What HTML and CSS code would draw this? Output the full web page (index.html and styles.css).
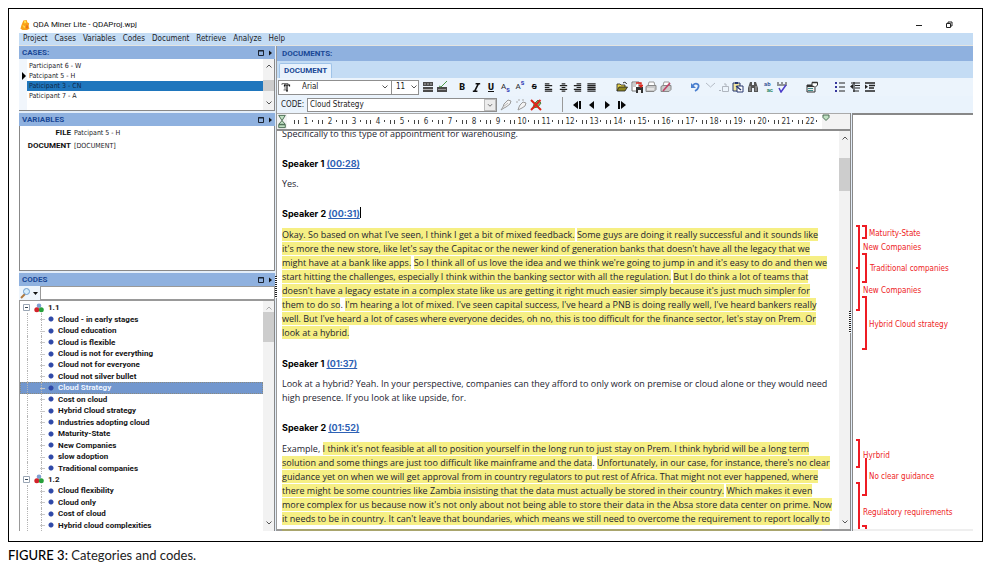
FILE: index.html
```html
<!DOCTYPE html>
<html lang="en">
<head>
<meta charset="utf-8">
<title>QDA Miner Lite - QDAProj.wpj</title>
<link rel="stylesheet" href="styles.css">
</head>
<body>
<figure class="figure">
<div class="frame">
<div class="app">
  <header class="titlebar">
    <svg class="logo" viewBox="0 0 12 13"><path d="M4 1l4-.6 1 3 2 1-.6 3.600 1 3-3 1.600H3L.6 11l1-4z" fill="#f9a11b"/><path d="M4.600 1.600l2.600-.3.4 2.500-2.200 1zM3 6.400l3 1.600-.8 2.600z" fill="#ffe14d"/><path d="M8 6l2 2-1 3-2-1z" fill="#e9711c"/></svg>
    <h1 class="title">QDA Miner Lite - QDAProj.wpj</h1>
    <div class="window-buttons">
      <button aria-label="Minimize"><svg viewBox="0 0 8 8"><path d="M1 4.500h6" stroke="#222" fill="none"/></svg></button>
      <button aria-label="Restore"><svg viewBox="0 0 8 8"><path d="M1.500 2.500h4v4h-4zM3 2V1h4v4H6" stroke="#222" fill="none"/></svg></button>
    </div>
  </header>
  <nav class="menubar">
    <button>Project</button><button>Cases</button><button>Variables</button><button>Codes</button><button>Document</button><button>Retrieve</button><button>Analyze</button><button>Help</button>
  </nav>

  <div class="workspace">
    <aside class="sidebar">
      <section class="panel cases">
        <div class="panel-head"><h2>CASES:</h2><svg class="panel-tools" viewBox="0 0 16 8"><path d="M1.500 1.500h5v5h-5zM1 2h6" stroke="#1b2433" fill="none"/><path d="M12 1.500l3 2.500-3 2.500z" fill="#111"/></svg></div>
        <div class="panel-body">
          <ul class="case-list">
            <li>Participant 6 - W</li>
            <li class="current">Patcipant 5 - H</li>
            <li class="selected">Paticipant 3 - CN</li>
            <li>Paticipant 7 - A</li>
          </ul>
          <div class="scrollbar"><svg viewBox="0 0 8 8"><path d="M1.500 5.500L4 3l2.500 2.500" class="chev"/></svg><span class="thumb"></span><svg class="down" viewBox="0 0 8 8"><path d="M1.500 2.500L4 5l2.500-2.500" class="chev"/></svg></div>
        </div>
      </section>

      <section class="panel variables">
        <div class="panel-head"><h2>VARIABLES</h2><svg class="panel-tools" viewBox="0 0 16 8"><path d="M1.500 1.500h5v5h-5zM1 2h6" stroke="#1b2433" fill="none"/><path d="M12 1.500l3 2.500-3 2.500z" fill="#111"/></svg></div>
        <div class="panel-body">
          <table class="variable-table">
            <tr><th scope="row">FILE</th><td>Patcipant 5 - H</td></tr>
            <tr><th scope="row">DOCUMENT</th><td>[DOCUMENT]</td></tr>
          </table>
        </div>
      </section>

      <section class="panel codes">
        <div class="panel-head"><h2>CODES</h2><svg class="panel-tools" viewBox="0 0 16 8"><path d="M1.500 1.500h5v5h-5zM1 2h6" stroke="#1b2433" fill="none"/><path d="M12 1.500l3 2.500-3 2.500z" fill="#111"/></svg></div>
        <div class="search">
          <button aria-label="Search options"><svg viewBox="0 0 20 12"><path d="M2 11l4-4" stroke="#b0793f" stroke-width="2"/><circle cx="7.500" cy="4.500" r="3" fill="#d5ecfb" stroke="#6d9ccc"/><path d="M14 5h5l-2.500 3z" fill="#111"/></svg></button>
          <input type="text" aria-label="Search codes">
        </div>
        <div class="panel-body">
          <ul class="tree">
            <li class="root"><svg class="box" viewBox="0 0 7 7"><path d="M.5.500h6v6h-6z" fill="#fff" stroke="#9aa6b5"/><path d="M2 3.500h3" stroke="#345"/></svg><svg class="balls" viewBox="0 0 10 10"><circle cx="5" cy="2.800" r="2.300" fill="#7f9fd0"/><circle cx="2.800" cy="6.800" r="2.500" fill="#d3222a"/><circle cx="7.300" cy="6.800" r="2.500" fill="#27a03a"/></svg>1.1</li>
            <li>Cloud - in early stages</li>
            <li>Cloud education</li>
            <li>Cloud is flexible</li>
            <li>Cloud is not for everything</li>
            <li>Cloud not for everyone</li>
            <li>Cloud not silver bullet</li>
            <li class="selected">Cloud Strategy</li>
            <li>Cost on cloud</li>
            <li>Hybrid Cloud strategy</li>
            <li>Industries adopting cloud</li>
            <li>Maturity-State</li>
            <li>New Companies</li>
            <li>slow adoption</li>
            <li class="last">Traditional companies</li>
            <li class="root"><svg class="box" viewBox="0 0 7 7"><path d="M.5.500h6v6h-6z" fill="#fff" stroke="#9aa6b5"/><path d="M2 3.500h3" stroke="#345"/></svg><svg class="balls" viewBox="0 0 10 10"><circle cx="5" cy="2.800" r="2.300" fill="#7f9fd0"/><circle cx="2.800" cy="6.800" r="2.500" fill="#d3222a"/><circle cx="7.300" cy="6.800" r="2.500" fill="#27a03a"/></svg>1.2</li>
            <li>Cloud flexibility</li>
            <li>Cloud only</li>
            <li>Cost of cloud</li>
            <li>Hybrid cloud complexities</li>
          </ul>
          <div class="scrollbar"><svg viewBox="0 0 8 8"><path d="M1.500 5.500L4 3l2.500 2.500" class="chev faint"/></svg><span class="thumb"></span><svg class="down" viewBox="0 0 8 8"><path d="M1.500 2.500L4 5l2.500-2.500" class="chev"/></svg></div>
        </div>
      </section>
    </aside>

    <div class="splitter main-split"><span class="grip"></span></div>

    <main class="documents">
      <div class="panel-head doc-head"><h2>DOCUMENTS:</h2></div>
      <div class="tabs"><button class="tab">DOCUMENT</button></div>

      <div class="toolbar">
        <div class="combo font-combo">
          <svg class="tt" viewBox="0 0 10 10"><path d="M1 3V1.500h6V3M4 1.500V8M2.500 8h3" stroke="#777" fill="none"/><path d="M3.500 4.500V3h5v1.500M6 3v6M5 9h2" stroke="#111" fill="none" stroke-width="1.200"/></svg>
          <select aria-label="Font"><option>Arial</option></select>
          <svg class="arrow" viewBox="0 0 8 8"><path d="M1.500 2.500L4 5l2.500-2.500" class="chev"/></svg>
        </div>
        <div class="combo size-combo">
          <select aria-label="Font size"><option>11</option></select>
          <svg class="arrow" viewBox="0 0 8 8"><path d="M1.500 2.500L4 5l2.500-2.500" class="chev"/></svg>
        </div>
        <div class="group g-rec">
          <button aria-label="Record"><svg viewBox="0 0 12 12"><path d="M1 1h10v4H1zM1 6h10v5H1z" fill="#4b4b4b"/><path d="M2 3h2M5 3h2M8 3h2M1 8.500h10" stroke="#ccc" stroke-width=".8"/></svg></button>
          <button aria-label="Edit field"><svg viewBox="0 0 12 12"><path d="M1 6h10v5H1z" fill="#4b4b4b"/><path d="M2 8.500h8" stroke="#aaa" stroke-width=".8"/><path d="M3 5l2 1 6-6" stroke="#4c9a4a" fill="none"/></svg></button>
        </div>
        <div class="group g-format">
          <button class="b" aria-label="Bold">B</button>
          <button aria-label="Italic"><svg viewBox="0 0 12 12"><path d="M5 2h5M2 10h5M8 2L4 10" stroke="#111" stroke-width="1.700"/></svg></button>
          <button class="b u" aria-label="Underline">U</button>
          <button aria-label="Subscript" class="sub">A<sub>s</sub></button>
          <button aria-label="Superscript" class="sub">A<sup>s</sup></button>
          <button aria-label="Strikethrough" class="b strike">S</button>
          <button aria-label="Align left"><svg viewBox="0 0 12 12"><path d="M2 2h5M2 4h8M2 6h5M2 8h8M2 10h8" stroke="#222" stroke-width="1.300"/></svg></button>
          <button aria-label="Align center"><svg viewBox="0 0 12 12"><path d="M4 2h4M2 4h8M4 6h4M2 8h8M4 10h4" stroke="#222" stroke-width="1.300"/></svg></button>
          <button aria-label="Align right"><svg viewBox="0 0 12 12"><path d="M5 2h5M2 4h8M5 6h5M2 8h8M3 10h7" stroke="#222" stroke-width="1.300"/></svg></button>
          <button aria-label="Justify"><svg viewBox="0 0 12 12"><path d="M1.500 2h9M1.500 4h9M1.500 6h9M1.500 8h9M1.500 10h9" stroke="#222" stroke-width="1.400"/></svg></button>
        </div>
        <div class="group g-file">
          <button aria-label="Open"><svg viewBox="0 0 12 12"><path d="M1 10V3h3l1 1h4v2" fill="#e8d44c" stroke="#222" stroke-width=".8"/><path d="M1 10l2-4h8.500L9 10z" fill="#8c8420" stroke="#222" stroke-width=".8"/><path d="M7 2c2-1.500 3-.5 3.500 1" stroke="#222" fill="none"/></svg></button>
          <button aria-label="Save"><svg viewBox="0 0 12 12"><path d="M1 1h7v9H1z" fill="#fff" stroke="#777"/><path d="M2 3h4M2 5h3" stroke="#999"/><path d="M5 6h7v6H5z" fill="#333"/><path d="M7 9h3v3H7z" fill="#eee"/><path d="M5 2h5v4M8 4l2 2 2-2" stroke="#d8261c" fill="none" stroke-width="1.400"/></svg></button>
          <button aria-label="Print"><svg viewBox="0 0 12 12"><path d="M3 5l1-4h5l1 4" fill="#fff" stroke="#999"/><path d="M1 5.500l2-1h8v4l-2 2H1z" fill="#c9c9c9" stroke="#888"/><path d="M2 8h7" stroke="#fff"/></svg></button>
          <button aria-label="Cancel print"><svg viewBox="0 0 12 12"><path d="M3 5l1-4h5l1 4" fill="#fff" stroke="#999"/><path d="M1 5.500l2-1h8v4l-2 2H1z" fill="#c9c9c9" stroke="#888"/><path d="M3 10l7-8" stroke="#c04468" stroke-width="1.600"/></svg></button>
        </div>
        <div class="group g-edit">
          <button aria-label="Undo"><svg viewBox="0 0 12 12"><path d="M4 4.500C6 1.500 10.500 2.500 9.500 6c-.5 2-1.500 3-3.500 4" stroke="#4a7fcf" stroke-width="1.800" fill="none"/><path d="M2 2v5h5z" fill="#4a7fcf"/></svg></button>
          <button aria-label="Cut"><svg viewBox="0 0 12 12"><path d="M2 2l4.500 4L11 2" stroke="#b5bcc6" fill="none"/></svg></button>
          <button aria-label="Copy"><svg viewBox="0 0 12 12"><path d="M4.500 5.500h6v5h-6zM6 3h2v2M1 9.500h2" stroke="#b0b6bf" fill="none"/></svg></button>
          <button aria-label="Paste"><svg viewBox="0 0 12 12"><path d="M1 2h7v8H1z" fill="#f2e7a0" stroke="#26366e"/><path d="M3 1h3v2H3z" fill="#26366e"/><path d="M5 5h6v6H5z" fill="#fff" stroke="#26366e"/><path d="M4 5l5 4" stroke="#26366e" stroke-width="1.400"/></svg></button>
          <button aria-label="Find"><svg viewBox="0 0 12 12"><path d="M3 1h2v3h2V1h2l2 6v4H7V7H5v4H1V7z" fill="#555"/><path d="M3 5v5M9 5v5" stroke="#ccc" stroke-width=".8"/></svg></button>
          <button aria-label="Replace" class="tiny"><span>ab</span><span class="green">ac</span></button>
          <button aria-label="Spelling"><svg viewBox="0 0 12 12"><path d="M1 2h2M5 2h2M9 2h2M1 4h10" stroke="#333"/><path d="M3 7l2 4 5-7" stroke="#4b3bc9" fill="none" stroke-width="1.500"/></svg></button>
        </div>
        <div class="group g-props">
          <button aria-label="Properties"><svg viewBox="0 0 12 12"><path d="M1 4h8v7H1z" fill="#eee" stroke="#333"/><path d="M1 5h8" stroke="#333" stroke-width="2"/><path d="M2 7.500h5M2 9.500h5" stroke="#3c8a8a"/><path d="M6 4V1.500h5.500V4l-2 2" fill="#fff" stroke="#333"/><path d="M6 1.500h5.500" stroke="#333" stroke-width="1.500"/></svg></button>
        </div>
        <div class="group g-list">
          <button aria-label="Bullets"><svg viewBox="0 0 12 12"><path d="M5 2h6M5 6h6M5 10h6" stroke="#222" stroke-width="1.200"/><path d="M1 2h2M1 6h2M1 10h2" stroke="#35359c" stroke-width="2"/></svg></button>
          <button aria-label="Outdent"><svg viewBox="0 0 12 12"><path d="M2 2h9M6 4.500h5M6 7h5M4 10h6M5 1v10" stroke="#222" stroke-width="1.200"/><path d="M4 3v5L1 5.500z" fill="#222"/></svg></button>
          <button aria-label="Indent"><svg viewBox="0 0 12 12"><path d="M1 2h10M5 4.500h6M5 7h5M1 10h10" stroke="#222" stroke-width="1.500"/><path d="M1 3.500v4.500l3-2.300z" fill="#222"/></svg></button>
        </div>
      </div>

      <div class="toolbar code-bar">
        <label for="code">CODE:</label>
        <div class="combo code-combo">
          <select id="code"><option>Cloud Strategy</option></select>
          <svg class="arrow boxed" viewBox="0 0 12 12"><path d="M3.500 5L6 7.500 8.500 5" class="chev"/></svg>
        </div>
        <div class="group g-mark">
          <button aria-label="Highlight"><svg viewBox="0 0 12 12"><path d="M1 11l2-3 1-3 4-4 3 1-1 3-4 3-2 1z" fill="#f4f4f4" stroke="#9a9a9a"/><path d="M3 8l5-4" stroke="#bbb"/></svg></button>
          <button aria-label="Auto highlight"><svg viewBox="0 0 12 12"><path d="M3 11l1-3 1-2 3-3 3 1-1 3-3 2-2 1z" fill="#f4f4f4" stroke="#9a9a9a"/><path d="M1 3h2M3 1h2M7 1h2" stroke="#aaa"/></svg></button>
          <button aria-label="Remove code"><svg viewBox="0 0 12 12"><path d="M3 9l1-4 4-4 3 3-3 4z" fill="#7fb46b" stroke="#4d7f3d"/><path d="M1 1l10 10M10.500 1L1 11" stroke="#dd2418" stroke-width="2"/></svg></button>
        </div>
        <span class="separator"></span>
        <div class="group g-nav">
          <button aria-label="First"><svg viewBox="0 0 12 12"><path d="M7 2v8L2 6zM8 2h2v8H8z" fill="#080808"/></svg></button>
          <button aria-label="Previous"><svg viewBox="0 0 12 12"><path d="M8 2v8L3 6z" fill="#080808"/></svg></button>
          <button aria-label="Next"><svg viewBox="0 0 12 12"><path d="M4 2v8l5-4z" fill="#080808"/></svg></button>
          <button aria-label="Last"><svg viewBox="0 0 12 12"><path d="M5 2v8l5-4zM2 2h2v8H2z" fill="#080808"/></svg></button>
        </div>
      </div>

      <div class="content">
        <div class="editor">
          <div class="ruler">
            <svg class="indent" viewBox="0 0 10 16"><path d="M1.500 1.500h7L5 7zM5 7l3.500 4h-7zM1.500 11.500h7v3h-7z" fill="#bfe0c2" stroke="#4a6b52"/></svg>
            <ol class="marks"><li>1</li><li>2</li><li>3</li><li>4</li><li>5</li><li>6</li><li>7</li><li>8</li><li>9</li><li>10</li><li>11</li><li>12</li><li>13</li><li>14</li><li>15</li><li>16</li><li>17</li><li>18</li><li>19</li><li>20</li><li>21</li><li>22</li></ol>
            <svg class="margin" viewBox="0 0 8 8"><path d="M1 1h6v2.500L4 6.500l-3-3z" fill="#bfe0c2" stroke="#4a6b52"/></svg>
          </div>
          <div class="page">
            <article class="text">
              <p>Specifically to this type of appointment for warehousing.</p>
              <h3>Speaker 1 <a href="#t0028">(00:28)</a></h3>
              <p>Yes.</p>
              <h3>Speaker 2 <a href="#t0031">(00:31)</a><span class="caret"></span></h3>
              <p class="coded"><mark>Okay. So based on what I've seen, I think I get a bit of mixed feedback.</mark> <mark>Some guys are doing it really successful and it sounds like<br>it's more the new store, like let's say the Capitac or the newer kind of generation banks that doesn't have all the legacy that we<br>might have at a bank like apps.</mark> <mark>So I think all of us love the idea and we think we're going to jump in and it's easy to do and then we<br>start hitting the challenges, especially I think within the banking sector with all the regulation.</mark> <mark>But I do think a lot of teams that<br>doesn't have a legacy estate in a complex state like us are getting it right much easier simply because it's just much simpler for<br>them to do so</mark>. <mark>I'm hearing a lot of mixed. I've seen capital success, I've heard a PNB is doing really well, I've heard bankers really<br>well. But I've heard a lot of cases where everyone decides, oh no, this is too difficult for the finance sector, let's stay on Prem. Or<br>look at a hybrid.</mark></p>
              <h3>Speaker 1 <a href="#t0137">(01:37)</a></h3>
              <p>Look at a hybrid? Yeah. In your perspective, companies can they afford to only work on premise or cloud alone or they would need<br>high presence. If you look at like upside, for.</p>
              <h3>Speaker 2 <a href="#t0152">(01:52)</a></h3>
              <p class="coded">Example, <mark>I think it's not feasible at all to position yourself in the long run to just stay on Prem. I think hybrid will be a long term<br>solution and some things are just too difficult like mainframe and the data</mark>. <mark>Unfortunately, in our case, for instance, there's no clear<br>guidance yet on when we will get approval from in country regulators to put rest of Africa. That might not ever happened, where<br>there might be some countries like Zambia insisting that the data must actually be stored in their country.</mark> <mark>Which makes it even<br>more complex for us because now it's not only about not being able to store their data in the Absa store data center on prime. Now<br>it needs to be in country. It can't leave that boundaries, which means we still need to overcome the requirement to report locally to</mark></p>
            </article>
            <div class="scrollbar"><svg viewBox="0 0 8 8"><path d="M1.500 5.500L4 3l2.500 2.500" class="chev"/></svg><span class="thumb"></span><svg class="down" viewBox="0 0 8 8"><path d="M1.500 2.500L4 5l2.500-2.500" class="chev"/></svg></div>
          </div>
          <div class="page-edge"><span></span></div>
        </div>
        <div class="splitter note-split"><span class="grip"></span></div>
        <aside class="codings">
          <svg class="coding-map">
            <g fill="none" stroke="#ee1c24" stroke-width="2">
              <path d="M3 111h3v84H3M3 153h3M9 111h4v12H9M9 139h4v28H9M9 182h4v52H9M3 325h3v27H3M13 343v37H9M3 368h3v48M9 411h4v5"/>
            </g>
            <g class="coding-labels">
              <text x="16" y="121">Maturity-State</text>
              <text x="10" y="135">New Companies</text>
              <text x="17" y="156">Traditional companies</text>
              <text x="10" y="178">New Companies</text>
              <text x="16" y="212">Hybrid Cloud strategy</text>
              <text x="10" y="343">Hyrbrid</text>
              <text x="16" y="364">No clear guidance</text>
              <text x="10" y="400">Regulatory requirements</text>
            </g>
          </svg>
        </aside>
      </div>
    </main>
  </div>
</div>
</div>
<figcaption><b>FIGURE 3:</b> Categories and codes.</figcaption>
</figure>
</body>
</html>
```
FILE: styles.css
```css
* { box-sizing: border-box; }
body { margin: 0; background: #fff; color: #1c1c28; font: 8px/10px "DejaVu Sans Condensed", "DejaVu Sans", sans-serif; }
h1, h2, h3, p, ul, ol, figure { margin: 0; padding: 0; font-size: inherit; }
ul, ol { list-style: none; }
svg { display: block; flex: none; }
button { margin: 0; padding: 0; border: 0; background: none; color: inherit; font: inherit; }
.chev { fill: none; stroke: #555; stroke-width: 1; }
.faint { stroke: #aaa; }

.figure { display: flex; flex-direction: column; height: 100vh; padding: 8px 13px 0 8px; }
.frame { flex: 1; min-height: 0; display: flex; border: 1px solid #000; padding: 8px 9px 10px 10px; }
.app { flex: 1; min-width: 0; display: flex; flex-direction: column; }
figcaption { flex: none; height: 33px; padding-top: 4px; font: 13px/18px Lato, sans-serif; color: #222; }
figcaption b { font-weight: 500; color: #000; }

.titlebar { display: flex; align-items: center; height: 16px; flex: none; gap: 3px; padding: 0 20px 0 1px; }
.logo { width: 10px; height: 12px; }
.title { flex: 1; font: 400 8px/10px Roboto, sans-serif; color: #111; }
.window-buttons { display: flex; gap: 22px; }
.window-buttons svg { width: 8px; height: 8px; }
.menubar { display: flex; flex: none; gap: 7px; height: 13px; padding: 0 4px; background: #c4dcf4; border-bottom: 1px solid #e4e4e0; }

.workspace { flex: 1; min-height: 0; display: grid; grid-template-columns: 256px 2px 1fr; }
.sidebar { min-height: 0; display: grid; grid-template-rows: 65px 158px 1fr; gap: 2px; background: #e3edf8; }
.panel { display: flex; flex-direction: column; min-height: 0; }
.panel-head { display: flex; flex: none; align-items: center; justify-content: space-between; height: 13px; padding: 0 2px 0 3px; background: #8fb1df; }
.panel-head h2 { font: 700 8px/10px Roboto, sans-serif; color: #1a4896; }
.panel-tools { width: 16px; height: 8px; }
.panel-body { flex: 1; min-height: 0; display: flex; background: #fff; border-right: 1px solid #888; border-bottom: 1px solid #888; overflow: hidden; }

.scrollbar { flex: none; display: flex; flex-direction: column; align-items: center; width: 11px; background: #f2f2f2; padding: 3px 0; }
.scrollbar svg { width: 8px; height: 8px; }
.thumb { flex: none; align-self: stretch; background: #cdcdcd; height: 30px; }
.scrollbar .down { margin-top: auto; }

.case-list { flex: 1; padding-top: 2px; font-size: 7px; background: linear-gradient(90deg, #f1f6fc 8px, #fff 8px); }
.case-list li { position: relative; height: 10px; margin-left: 8px; padding-left: 2px; }
.case-list .current::before { content: ""; position: absolute; left: -5px; top: 1px; border: 4px solid transparent; border-left-color: #000; border-right: 0; }
.case-list .selected { background: #1f76bd; color: #0f2747; }
.cases .thumb { height: 11px; margin-top: 10px; }

.variables .panel-body { border-left: 1px solid #888; }
.variable-table { border-collapse: collapse; align-self: flex-start; }
.variable-table th { width: 52px; padding: 2px 1px 1px 0; text-align: right; font: 700 8px/10px Roboto, sans-serif; color: #111; }
.variable-table td { padding: 2px 0 1px 2px; font-size: 7px; }

.search { display: flex; flex: none; height: 14px; background: #eef5fc; }
.search button { width: 21px; }
.search button svg { width: 20px; height: 12px; }
.search input { flex: 1; min-width: 0; border: 1px solid #999; padding: 0 2px; background: #fff; font: inherit; }
.codes .panel-body { border-left: 1px solid #999; border-top: 1px solid #999; border-bottom: 0; }
.tree { flex: 1; display: grid; grid-auto-rows: 1fr; padding-top: 1px; font: 700 8px/11px Roboto, sans-serif; color: #151515; }
.tree li { position: relative; display: flex; align-items: center; padding-left: 38px; min-height: 0; }
.tree li:not(.root)::before { content: ""; position: absolute; left: 7px; top: 0; bottom: 0; width: 13px; border-left: 1px dotted #b5b5b5; border-right: 1px dotted #b5b5b5; }
.tree li:not(.root)::after { content: ""; position: absolute; left: 20px; top: 50%; width: 17px; height: 6px; margin-top: -3px; background: radial-gradient(circle at 11px 3px, #2f49a8 2px, transparent 3px), linear-gradient(#c8c8c8, #c8c8c8) 0 3px / 5px 1px no-repeat; }
.tree .last::before { bottom: 50%; }
.tree li.root { padding-left: 3px; gap: 4px; }
.tree .selected { background: #7297ce; color: #eef4ff; outline: 1px dotted #8a8a80; outline-offset: -1px; }
.tree .box { width: 7px; height: 7px; }
.tree .balls { width: 10px; height: 10px; }
.codes .scrollbar { padding-bottom: 4px; }

.splitter { position: relative; background: #e3edf8; }
.main-split { border-right: 1px solid #999; }
.grip { position: absolute; left: 0; width: 2px; height: 22px; background: repeating-linear-gradient(#222 0 1px, #fff 1px 2px); }
.main-split .grip { top: 230px; }

.documents { min-width: 0; min-height: 0; display: flex; flex-direction: column; }
.doc-head { height: 15px; padding-left: 5px; }
.tabs { flex: none; height: 17px; padding: 2px 2px 0; background: #c4dcf4; }
.tab { height: 15px; padding: 0 4px; background: #e8f2fc; border: 1px solid #9fc3e8; border-bottom: 0; border-radius: 2px 2px 0 0; font: 700 8px/10px Roboto, sans-serif; color: #1a4896; }
.toolbar { flex: none; display: flex; align-items: center; height: 18px; padding-left: 1px; background: #ecf4fc; }
.combo { display: flex; align-items: center; height: 15px; background: #fff; border: 1px solid #8f8f8f; }
.combo select { flex: 1; min-width: 0; height: 13px; padding: 0; border: 0; background: none; appearance: none; color: #222; font: 8px/12px "DejaVu Sans Condensed", sans-serif; }
.font-combo { width: 114px; padding: 0 2px; }
.font-combo select { padding-left: 11px; }
.tt { width: 10px; height: 10px; }
.arrow { width: 8px; height: 8px; }
.size-combo { width: 27px; padding-left: 4px; border-left: 0; }
.group { display: flex; align-items: center; height: 14px; }
.group button { flex: 1; display: flex; align-items: center; justify-content: center; height: 14px; }
.group svg { width: 12px; height: 12px; }
.g-rec { width: 28px; margin-left: 2px; }
.g-format { width: 144px; margin-left: 6px; }
.g-format svg { width: 11px; height: 11px; }
.g-file { width: 58px; margin-left: 16px; }
.g-edit { width: 101px; margin-left: 15px; }
.g-props { width: 14px; margin-left: 16px; }
.g-list { width: 44px; margin-left: 14px; }
.group .b { font: 900 9px/12px Roboto, sans-serif; color: #111; }
.group .u { text-decoration: underline; }
.group .strike { font-size: 8px; text-decoration: line-through; }
.group .sub { font: 8px/10px Roboto, sans-serif; }
.sub sub, .sub sup { font: 700 7px/7px Roboto, sans-serif; color: #3a48b8; }
.sub sub { align-self: flex-end; }
.sub sup { align-self: flex-start; }
.group .tiny { flex-direction: column; font: 700 6px/6px Roboto, sans-serif; color: #3c5c9c; }
.tiny .green { color: #2c8a6a; padding-left: 5px; }

.code-bar { height: 17px; padding-left: 4px; background: #eaf3fc; font-size: 8px; }
.code-combo { width: 190px; margin-left: 2px; padding-left: 2px; height: 14px; }
.code-bar label { width: 24px; }
.arrow.boxed { width: 12px; height: 12px; background: #ececec; border: 1px solid #bbb; }
.g-mark { width: 46px; margin-left: 1px; }
.separator { width: 1px; height: 15px; margin-left: 18px; background: #999; }
.g-nav { width: 60px; margin-left: 6px; }

.content { flex: 1; min-height: 0; display: grid; grid-template-columns: 1fr 3px 120px; }
.editor { min-width: 0; min-height: 0; display: flex; flex-direction: column; }
.ruler { flex: none; display: flex; height: 18px; padding-right: 20px; background: #f3f3f3; border-bottom: 2px solid #8c8c8c; border-top: 1px solid #aaa; }
.indent { width: 10px; height: 15px; }
.marks { flex: 1; min-width: 0; display: flex; padding-left: 7px; background: #fff; }
.marks li { flex: 1; text-align: center; line-height: 15px; color: #333; background: linear-gradient(#444, #444) 0 6px / 1px 4px no-repeat, linear-gradient(#444, #444) 4px 6px / 1px 4px no-repeat, linear-gradient(#444, #444) 18px 6px / 1px 2px no-repeat; }
.margin { width: 8px; height: 8px; }
.page { flex: 1; min-height: 0; display: flex; overflow: hidden; background: #fff; }
.text { flex: 1; min-width: 0; margin-top: -4px; padding-left: 5px; white-space: nowrap; font: 9px/14px "Open Sans", sans-serif; color: #23232f; }
.text h3 { margin-top: 16px; font: 700 9px/14px Inter, sans-serif; color: #000; }
.text p { margin-top: 6px; }
.text p:first-child { margin-top: 0; }
.text .coded { padding: 1px 0; }
.text a { color: #2f62b5; }
.text mark { background: #f6ef84; color: inherit; }
.caret { display: inline-block; width: 1px; height: 11px; background: #000; vertical-align: -1px; }
.page .thumb { height: 33px; margin-top: 16px; }
.page-edge { flex: none; height: 2px; padding-left: 5px; padding-right: 28px; background: #999; }
.page-edge span { display: block; height: 2px; background: #a9a56c; }
.note-split { border-left: 1px solid #888; border-right: 1px solid #888; }
.note-split .grip { top: 198px; left: -2px; }
.codings { min-height: 0; border-top: 2px solid #888; border-bottom: 2px solid #efefef; overflow: hidden; }
.coding-map { width: 100%; height: 100%; }
.coding-labels { fill: #ee1c24; }
```
